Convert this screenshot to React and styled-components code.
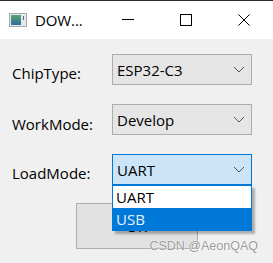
import React from 'react'
import styled, { createGlobalStyle } from 'styled-components'

const GlobalStyle = createGlobalStyle`
  html, body {
    margin: 0;
    padding: 0;
    background: #f0f0f0;
  }
  body {
    font-family: 'Open Sans', 'Noto Sans CJK SC', sans-serif;
  }
`

const Window = styled.div`
  position: relative;
  width: 273px;
  height: 263px;
  background: #f0f0f0;
  border-top: 1px solid #2b2b2b;
  box-sizing: border-box;
  overflow: hidden;
`

const TitleBar = styled.div`
  display: flex;
  align-items: center;
  height: 38px;
  background: #ffffff;
`

const AppIcon = styled.svg`
  margin-left: 9px;
  flex: none;
`

const Title = styled.div`
  margin-left: 8px;
  font-size: 15px;
  color: #000;
  letter-spacing: -0.1px;
  flex: 1;
`

const Controls = styled.div`
  display: flex;
  height: 100%;
`

const CtrlBtn = styled.div`
  width: 58px;
  height: 100%;
  display: flex;
  align-items: center;
  justify-content: center;
`

const Body = styled.div`
  display: flex;
  flex-direction: column;
  padding: 15px 21px 0 12px;
  gap: 19px;
`

const Row = styled.div`
  display: flex;
  align-items: center;
  height: 31px;
`

const Label = styled.div`
  width: 100px;
  font-size: 15px;
  color: #000;
  padding-top: ${(p) => p.drop}px;
`

const Combo = styled.div`
  position: relative;
  box-sizing: border-box;
  width: 140px;
  height: 31px;
  display: flex;
  align-items: center;
  justify-content: space-between;
  padding: 0 6px 0 4px;
  border: 1px solid ${(p) => (p.active ? '#0078d7' : '#adadad')};
  background: ${(p) => (p.active ? '#cce4f7' : '#e5e5e5')};
  font-size: 15px;
  color: #000;
`

const Popup = styled.div`
  position: absolute;
  left: -1px;
  top: 30px;
  width: 140px;
  box-sizing: border-box;
  border: 1px solid #0078d7;
  background: #fff;
  box-shadow: 3px 3px 2px rgba(0, 0, 0, 0.28);
  z-index: 2;
`

const Option = styled.div`
  height: 22px;
  display: flex;
  align-items: center;
  padding-left: 3px;
  font-size: 15px;
  color: ${(p) => (p.selected ? '#e8f2fb' : '#000')};
  background: ${(p) => (p.selected ? '#0078d7' : '#fff')};
`

const ButtonRow = styled.div`
  display: flex;
  justify-content: center;
  padding-left: 9px;
  margin-top: -1px;
`

const OkButton = styled.div`
  box-sizing: border-box;
  width: 122px;
  height: 46px;
  border: 1px solid #adadad;
  background: #e1e1e1;
  display: flex;
  align-items: center;
  justify-content: center;
  font-size: 15px;
  color: #000;
`

const Watermark = styled.div`
  position: absolute;
  right: 15px;
  bottom: 10px;
  font-family: 'Liberation Sans', Arial, sans-serif;
  font-size: 12.5px;
  color: #9a9a9a;
  text-shadow: 0 0 2px #fff, 0 0 1px #fff;
  z-index: 3;
`

const Chevron = () => (
  <svg width="12" height="7" viewBox="0 0 12 7">
    <path d="M1 1 L6 6 L11 1" fill="none" stroke="#555" strokeWidth="1" />
  </svg>
)

export default function App() {
  return (
    <Window>
      <GlobalStyle />
      <TitleBar>
        <AppIcon width="18" height="14" viewBox="0 0 18 14">
          <defs>
            <linearGradient id="ig" x1="0" y1="0" x2="0" y2="1">
              <stop offset="0" stopColor="#5aa36a" />
              <stop offset="1" stopColor="#2d6fa3" />
            </linearGradient>
          </defs>
          <rect x="0.5" y="0.5" width="17" height="13" fill="#e8e8e8" stroke="#a8a8a8" />
          <rect x="2" y="2" width="10" height="10" fill="url(#ig)" />
          <rect x="14" y="3" width="1" height="4" fill="#3a6fb0" />
        </AppIcon>
        <Title>DOW...</Title>
        <Controls>
          <CtrlBtn>
            <svg width="12" height="12" viewBox="0 0 12 12">
              <rect x="0" y="5" width="12" height="1" fill="#000" />
            </svg>
          </CtrlBtn>
          <CtrlBtn>
            <svg width="12" height="12" viewBox="0 0 12 12">
              <rect x="0.5" y="0.5" width="11" height="11" fill="none" stroke="#000" />
            </svg>
          </CtrlBtn>
          <CtrlBtn>
            <svg width="12" height="12" viewBox="0 0 12 12">
              <path d="M0.5 0.5 L11.5 11.5 M11.5 0.5 L0.5 11.5" stroke="#000" strokeWidth="1" />
            </svg>
          </CtrlBtn>
        </Controls>
      </TitleBar>
      <Body>
        <Row>
          <Label drop={6}>ChipType:</Label>
          <Combo>
            <span>ESP32-C3</span>
            <Chevron />
          </Combo>
        </Row>
        <Row>
          <Label drop={8}>WorkMode:</Label>
          <Combo>
            <span>Develop</span>
            <Chevron />
          </Combo>
        </Row>
        <Row>
          <Label drop={7}>LoadMode:</Label>
          <Combo active>
            <span>UART</span>
            <Chevron />
            <Popup>
              <Option>UART</Option>
              <Option selected>USB</Option>
            </Popup>
          </Combo>
        </Row>
        <ButtonRow>
          <OkButton>OK</OkButton>
        </ButtonRow>
      </Body>
      <Watermark>CSDN @AeonQAQ</Watermark>
    </Window>
  )
}
